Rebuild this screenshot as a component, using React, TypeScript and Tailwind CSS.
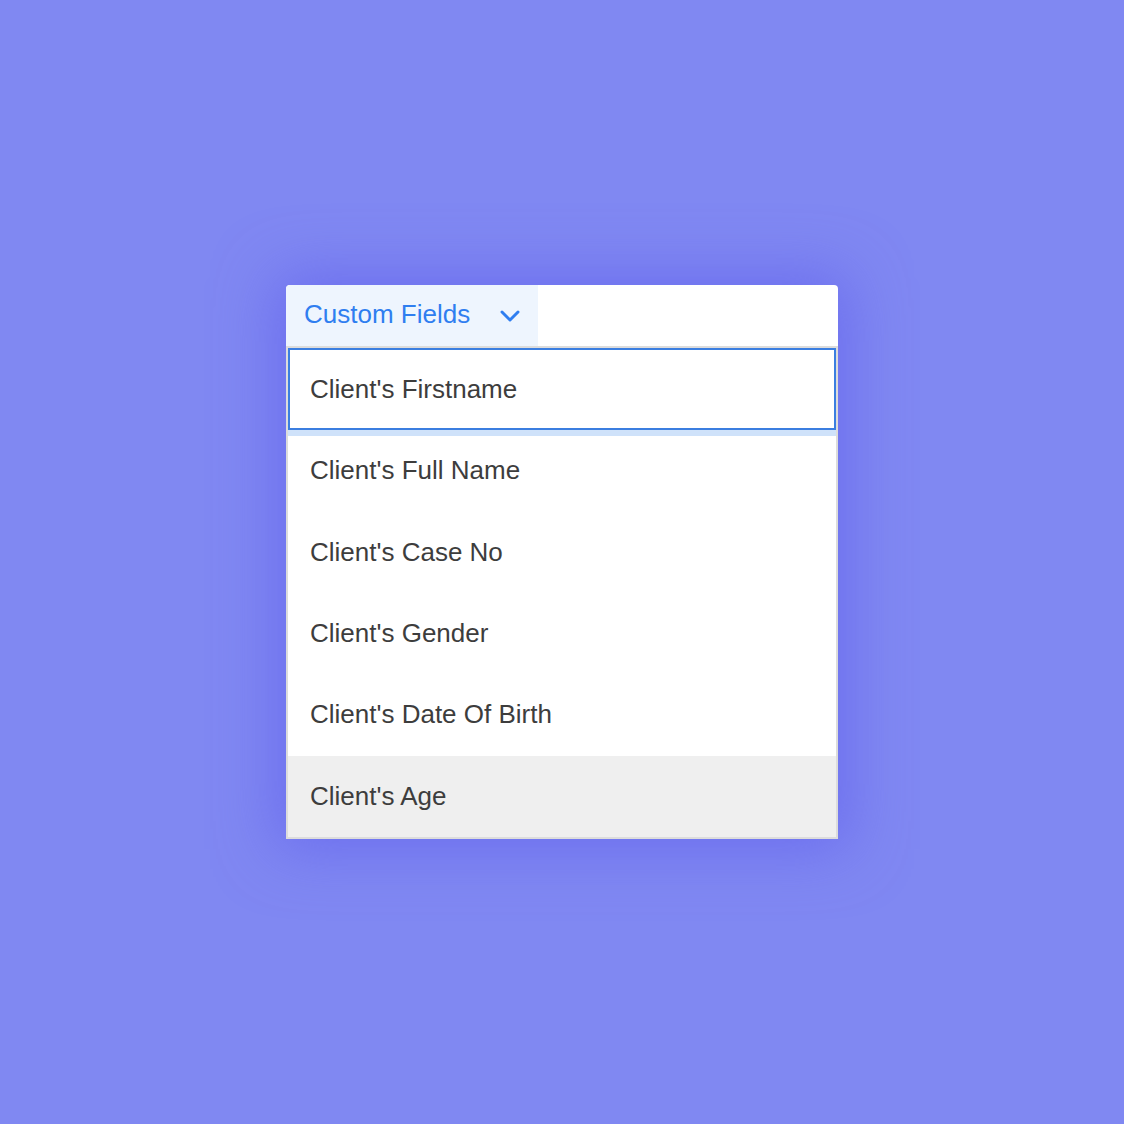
import { ChevronDown } from 'lucide-react'

const fields = [
  "Client's Full Name",
  "Client's Case No",
  "Client's Gender",
  "Client's Date Of Birth",
]

export default function App() {
  return (
    <div className="w-[1124px] h-[1124px] bg-[#8088f2] flex items-start justify-center pt-[285px] font-['Liberation_Sans',Arial,sans-serif]">
      <div className="w-[552px] h-[554px] bg-white rounded-t-[4px] flex flex-col shadow-[0_0_60px_10px_rgba(98,98,236,0.7)]">
        <div className="h-[61px] flex shrink-0">
          <button
            type="button"
            className="w-[252px] h-full bg-[#eef5fe] rounded-tl-[4px] flex items-center pl-[18px] pr-[12px] justify-between text-[#2f7ef0] text-[26px]"
          >
            <span className="-mt-[3px]">Custom Fields</span>
            <ChevronDown size={32} strokeWidth={2.2} />
          </button>
        </div>
        <div className="flex-1 flex flex-col border-2 border-[#dcdcdc] text-[#3d3d3d] text-[26px]">
          <div className="relative z-10 h-[82px] shrink-0 flex items-center pl-[20px] border-2 border-[#3b7ee0] shadow-[0_6px_0_0_#cfe2fa]">
            Client's Firstname
          </div>
          {fields.map((f) => (
            <div key={f} className="h-[81.4px] shrink-0 flex items-center pl-[22px]">
              {f}
            </div>
          ))}
          <div className="flex-1 flex items-center pl-[22px] bg-[#efefef]">Client's Age</div>
        </div>
      </div>
    </div>
  )
}
